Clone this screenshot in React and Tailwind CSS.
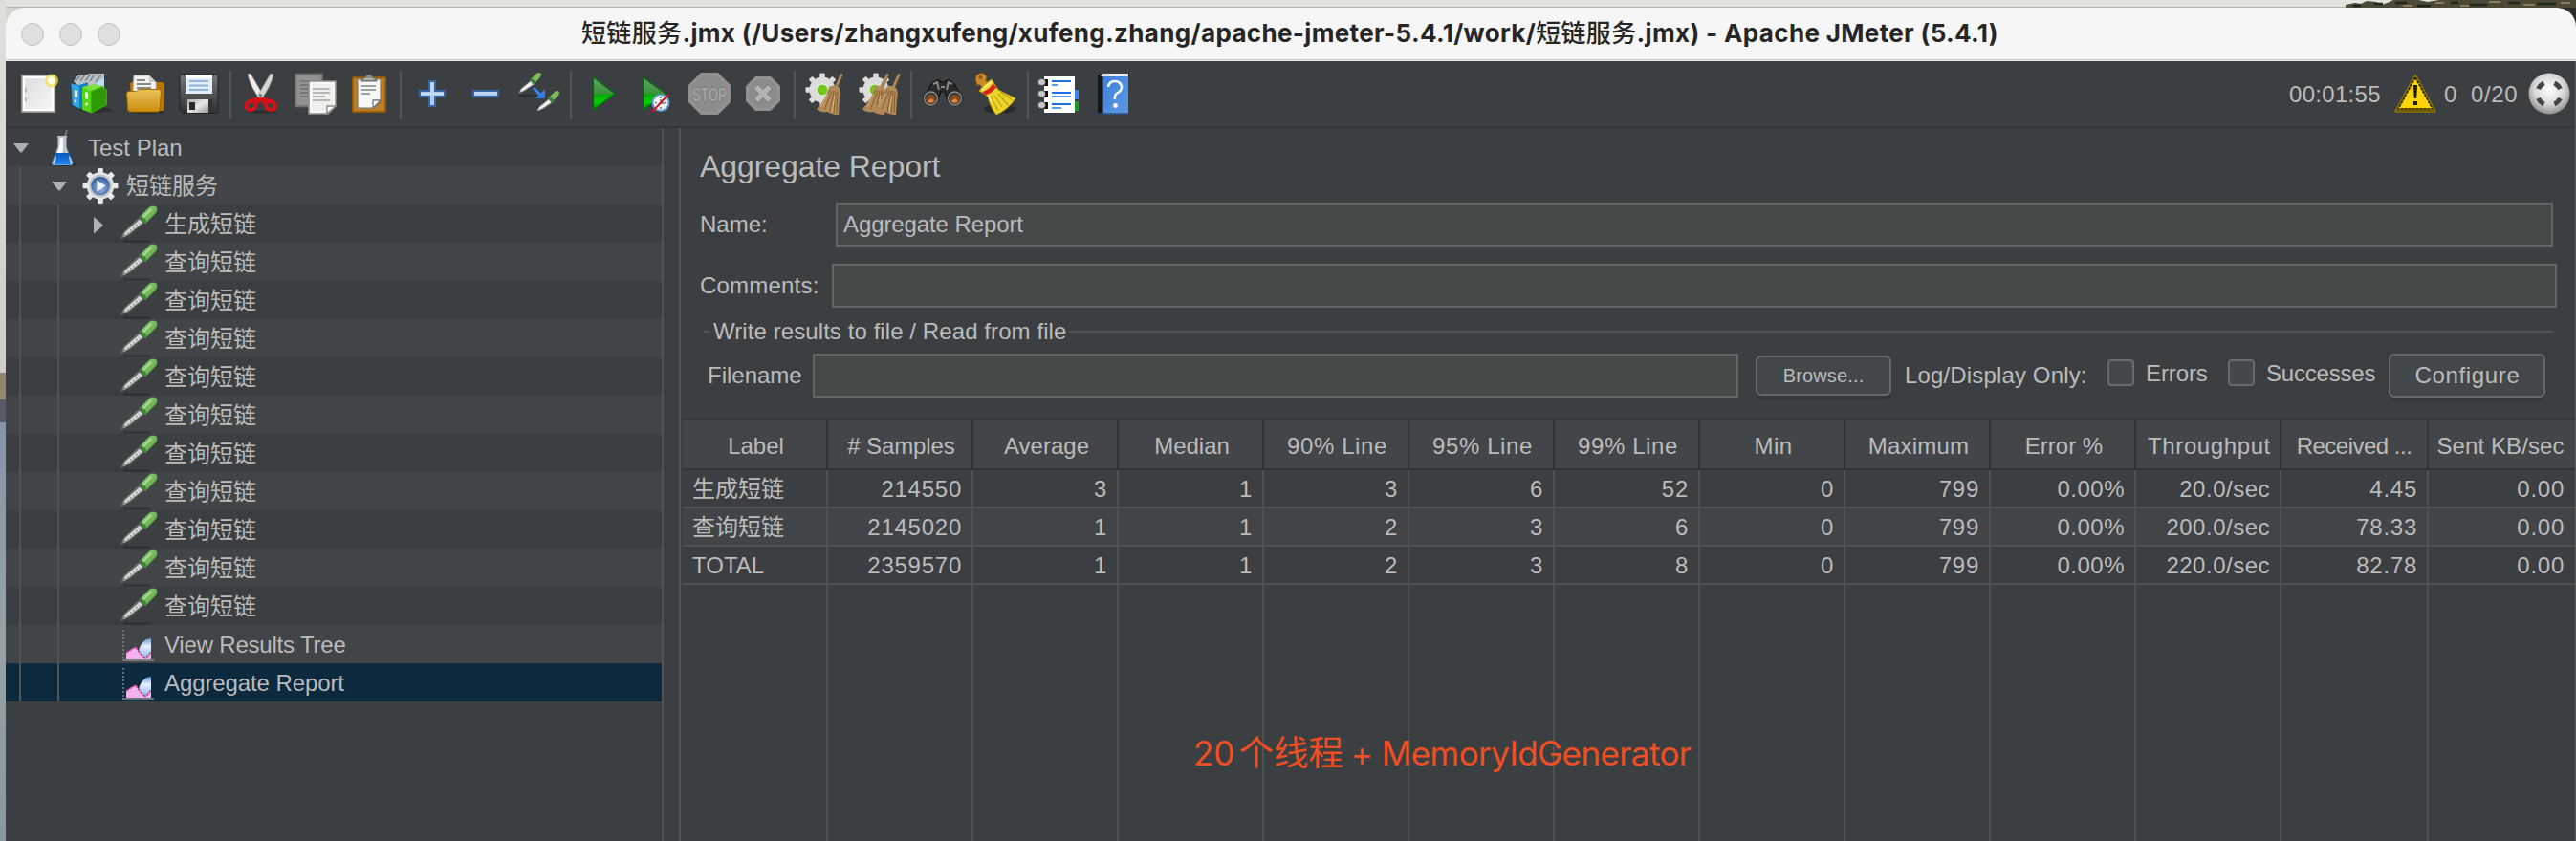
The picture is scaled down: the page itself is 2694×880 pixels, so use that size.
import React from "react";

const SANS = "font-['Liberation_Sans','Noto_Sans_CJK_SC',sans-serif]";
const INTER = "font-['Inter','Noto_Sans_CJK_SC',sans-serif]";

/* ---------- toolbar icons (44 x 44 drawing area) ---------- */

const NewIcon = () => (
  <>
    <rect x="4.8" y="2.8" width="34.5" height="38.4" fill="#fff" stroke="#8b8d8b" strokeWidth="1.7" />
    <rect x="8" y="6" width="28" height="32" fill="url(#paper)" />
    <path d="M8 16.5a1.8 1.8 0 0 1 0 3.4M8 26.5a1.8 1.8 0 0 1 0 3.4" fill="#fff" stroke="#999" strokeWidth="1.2" />
    <circle cx="36" cy="8.5" r="7" fill="#efe04c" opacity=".75" />
    <circle cx="36" cy="8.5" r="4" fill="#fffde0" />
  </>
);

const TemplatesIcon = () => (
  <>
    <ellipse cx="26" cy="39" rx="17" ry="3" fill="#000" opacity=".25" />
    <path d="M3 9l5-7 9 0 3-1h15v25H20z" fill="#b9c2c5" />
    <path d="M6 8l4-5M10 9l5-7M15 9l5-7M20 9l4-6M26 10l5-7M31 12l3-6" stroke="#7d868a" strokeWidth="1.6" />
    <path d="M28 10l7-5v18l-7 3z" fill="#b6e0f8" />
    <path d="M0 11l9 2 9-3v24l-8 4-8-4z" fill="#0f7fc4" />
    <path d="M1 12l8 2v23l-7-3z" fill="#35a5e4" />
    <path d="M4 18l3 1v7l-3-1z" fill="#e8f6ff" />
    <path d="M20 19l13-5 5 4v16l-17 9z" fill="#3aa90a" />
    <path d="M22 20l11-4 4 3v14l-15 8z" fill="#2f9a05" />
    <path d="M12 15l9 3v24l-9-3z" fill="#55d41e" />
    <path d="M12 15l12-3 10 2-13 5z" fill="#7be33f" />
    <path d="M15 20l3 1v7l-3-1z" fill="#effbe6" />
    <circle cx="16.5" cy="33" r="1.6" fill="#eefbe6" />
    <circle cx="5" cy="30" r="1.4" fill="#e8f6ff" />
  </>
);

const OpenIcon = () => (
  <>
    <ellipse cx="23" cy="41" rx="19" ry="2" fill="#000" opacity=".3" />
    <path d="M6 12q0-2 2-2h31q3 0 3 3l-1 27H8z" fill="#b87608" />
    <path d="M10 3h16l7 7v14H9z" fill="#f1f2f0" stroke="#babdb6" />
    <path d="M13 8h9M13 12h15M13 16h15" stroke="#888a85" strokeWidth="1.8" />
    <path d="M26 3v7h7z" fill="#c8cac6" />
    <path d="M2.500 22q0-2.500 3-2.500h7l3-2h20q3 0 3 2.500l-1.500 19q0 2-2.500 2H6q-2 0-2.200-2z" fill="url(#gold)" stroke="#a86a04" strokeWidth="1" />
  </>
);

const SaveIcon = () => (
  <>
    <path d="M2 4q0-2 2-2h35q3 0 3 2v37q0 1.500-2 1.500H5L2 39z" fill="url(#disk)" stroke="#222" strokeWidth="1" />
    <path d="M8 2h28v20H8z" fill="#e3edf8" />
    <path d="M8 2h28v4H8z" fill="#fff" />
    <path d="M12 9h20M12 13.500h20M12 18h20" stroke="#8fb3d9" strokeWidth="2" />
    <path d="M10 28h22v14H10z" fill="url(#metal)" />
    <path d="M12 31h6v8h-6z" fill="#2a2a2a" />
    <path d="M32 28h4v14h-4z" fill="#333" />
  </>
);

const CutIcon = () => (
  <>
    <ellipse cx="22" cy="41" rx="15" ry="1.800" fill="#000" opacity=".25" />
    <path d="M7 2l3-1 14 24-4 3Q10 15 7 2z" fill="#eeeeec" stroke="#999" strokeWidth=".8" />
    <path d="M34 2l-3-1-14 24 4 3Q31 15 34 2z" fill="#d3d7cf" stroke="#999" strokeWidth=".8" />
    <circle cx="20.500" cy="24" r="1.800" fill="#777" />
    <ellipse cx="10.500" cy="34.500" rx="5" ry="4.400" fill="none" stroke="#d81116" strokeWidth="4" transform="rotate(-35 10.500 34.500)" />
    <ellipse cx="31" cy="34.500" rx="5" ry="4.400" fill="none" stroke="#d81116" strokeWidth="4" transform="rotate(35 31 34.500)" />
    <path d="M9 30q7-3 11-2 5-1 12 2" fill="none" stroke="#d81116" strokeWidth="3.500" />
    <path d="M14 34l6-6M27 34l-6-6" stroke="#d81116" strokeWidth="3.500" />
  </>
);

const CopyIcon = () => (
  <>
    <rect x="1" y="1.500" width="28" height="34" fill="#858787" stroke="#6f7171" strokeWidth="1.500" />
    <rect x="3" y="3.500" width="24" height="30" fill="#919393" />
    <path d="M6 9h17M6 13h10M6 17h10M6 21h10M6 25h8" stroke="#6d6f6f" strokeWidth="1.600" />
    <path d="M15 9h28v26l-8 8H15z" fill="#fbfbfa" stroke="#8b8d88" strokeWidth="1.600" />
    <path d="M17.500 11.500h23v23l-7 6h-16z" fill="#efefed" />
    <path d="M19 17h18M19 21h18M19 25h13M19 29h18" stroke="#b6b8b4" strokeWidth="1.800" />
    <path d="M34 43v-8h9z" fill="#fff" stroke="#8b8d88" strokeWidth="1.500" />
  </>
);

const PasteIcon = () => (
  <>
    <rect x="4.800" y="4.800" width="34.400" height="36.400" rx="1" fill="#bd7d26" stroke="#8f5902" strokeWidth="1.700" />
    <path d="M10 7h24v23l-7 7H10z" fill="#f7f7f5" stroke="#777" strokeWidth="1.200" />
    <path d="M14 14h15M14 18h15M14 22h9" stroke="#a0a29e" strokeWidth="1.800" />
    <path d="M26 37v-8h8z" fill="#fff" stroke="#777" strokeWidth="1.300" />
    <path d="M14 9q0-4 4-4 1-3 4-3t4 3q4 0 4 4z" fill="#8b8d86" stroke="#666860" strokeWidth="1" />
    <path d="M17 7h10" stroke="#b9bbb4" strokeWidth="1.600" />
  </>
);

const PlusIcon = () => (
  <>
    <path d="M19 9h6v10h10v6H25v10h-6V25H9v-6h10z" fill="#b0cdee" stroke="#3465a4" strokeWidth="2" />
    <path d="M21 10.500h2v10.500h11v2H10v-2h11z" fill="#d0e2f6" opacity=".6" />
  </>
);

const MinusIcon = () => (
  <>
    <rect x="9" y="19" width="26" height="6" fill="#b0cdee" stroke="#3465a4" strokeWidth="2" />
    <path d="M10 21h24" stroke="#d0e2f6" strokeWidth="1.500" opacity=".7" />
  </>
);

const MiniDropper = ({ x, y }) => (
  <g transform={`translate(${x} ${y})`}>
    <path d="M1 21l2-4L14 8l4 3L6 19z" fill="#eceeeb" stroke="#8c8f8a" strokeWidth=".8" />
    <path d="M12 8l7-7q3-2 5 0 0 3-2 5l-6 6z" fill="#7fbb5c" />
    <path d="M12 8l2-2 5 4-3 3z" fill="#3e7f3a" />
  </g>
);

const ToggleIcon = () => (
  <>
    <ellipse cx="9" cy="24" rx="9" ry="1.500" fill="#000" opacity=".3" />
    <MiniDropper x={0} y={0} />
    <MiniDropper x={19} y={19} />
    <path d="M16 16l9 9" stroke="#3a86f0" strokeWidth="2.600" />
    <path d="M28 17v10H18z" fill="#2f7df0" />
  </>
);

const StartIcon = () => (
  <>
    <path d="M12 4l24 18-24 18z" fill="url(#green)" />
    <path d="M12.500 5v34l23-17z" fill="none" stroke="#0c5d12" strokeWidth="1.200" />
  </>
);

const StartNoPauseIcon = () => (
  <>
    <path d="M8 4l25 18L8 40z" fill="url(#green)" />
    <path d="M8.500 5v34l24-17z" fill="none" stroke="#0c5d12" strokeWidth="1.200" />
    <circle cx="27" cy="31.500" r="8.500" fill="#f4f7fb" stroke="#5f9bdc" strokeWidth="2" />
    <path d="M27 25v2M27 36v2M21 31.500h2M31 31.500h2M27 28v4h4" stroke="#777" strokeWidth="1.600" fill="none" />
    <path d="M18 41l17-18" stroke="#dd1414" strokeWidth="2" />
  </>
);

const StopIcon = () => (
  <>
    <path d="M13 0h18l13 13v18L31 44H13L0 31V13z" fill="#8c8c8c" />
    <path d="M14 2h16l12 12v16L30 42H14L2 30V14z" fill="none" stroke="#949494" strokeWidth="1.500" />
    <text x="22" y="29.500" textAnchor="middle" textLength="36" lengthAdjust="spacingAndGlyphs" fontFamily="Liberation Sans, sans-serif" fontWeight="bold" fontSize="21" fill="#a3a3a3" stroke="#747474" strokeWidth="1.200" paintOrder="stroke">STOP</text>
  </>
);

const ShutdownIcon = () => (
  <>
    <path d="M14 4h16l10 10v16L30 40H14L4 30V14z" fill="#8c8c8c" />
    <path d="M15 6h14l9 9v14l-9 9H15l-9-9V15z" fill="none" stroke="#969696" strokeWidth="1.400" />
    <path d="M14.500 14.500l15 15M29.500 14.500l-15 15" stroke="#7b7b7b" strokeWidth="7" />
    <path d="M15 15l14 14M29 15L15 29" stroke="#b4b4b4" strokeWidth="5.500" />
  </>
);

const Cog = ({ cx, cy, r, fill }) => (
  <g transform={`translate(${cx} ${cy})`}>
    {[0, 45, 90, 135, 180, 225, 270, 315].map((a) => (
      <rect key={a} x={-r * 0.2} y={-r * 1.3} width={r * 0.4} height={r * 0.5} rx="1" fill={fill} transform={`rotate(${a})`} />
    ))}
    <circle r={r} fill={fill} />
  </g>
);

const Besom = ({ dx }) => (
  <g transform={`translate(${dx} 0)`}>
    <path d="M37 1l3 .5-7 16-3-1z" fill="#a98a63" stroke="#6b4f2c" strokeWidth=".6" />
    <path d="M25 15q5-3 10 1 3 4 1 12l-1 16q-7 0-12-3-7 1-11-3 10-10 13-23z" fill="#b48a58" />
    <path d="M26 18L15 37M28 19l-8 20M30 19l-4 22M32 19l-2 23M34 20l-1 22" stroke="#7c5a31" strokeWidth=".9" />
    <path d="M24 22l-8 14M31 24l-3 17" stroke="#ddb987" strokeWidth="1" />
  </g>
);

const ClearIcon = () => (
  <>
    <Cog cx={18} cy={18} r={13.500} fill="#dcdcdc" />
    <circle cx="18" cy="18" r="6.500" fill="#f2f2f2" />
    <circle cx="18" cy="18" r="5.500" fill="#73c51f" />
    <Besom dx={0} />
  </>
);

const ClearAllIcon = () => (
  <>
    <Cog cx={18} cy={18} r={13.500} fill="#dcdcdc" />
    <circle cx="17" cy="18" r="6.500" fill="#f2f2f2" />
    <circle cx="17" cy="18" r="5.500" fill="#73c51f" />
    <Besom dx={-8} />
    <Besom dx={4} />
  </>
);

const SearchIcon = () => (
  <>
    <path d="M14 9q4-3 6 1h4q2-4 6-1l4 3 8 14-14 4-4-10h-4l-4 10L2 26l8-14z" fill="#2b2b2b" stroke="#111" strokeWidth="1.200" />
    <path d="M12 12l4-2 2 8M32 12l-4-2-2 8M20 15h4" stroke="#888" strokeWidth="2" fill="none" />
    <circle cx="9.500" cy="27" r="8.500" fill="#222" />
    <circle cx="9.500" cy="27" r="7" fill="#3a3a3a" stroke="#8d8d8d" strokeWidth="1.300" />
    <circle cx="9.500" cy="28" r="5" fill="#8a4a1c" />
    <path d="M6 30q3 3 7 0l-3-3z" fill="#d98a4c" />
    <circle cx="34.500" cy="27" r="8.500" fill="#222" />
    <circle cx="34.500" cy="27" r="7" fill="#3a3a3a" stroke="#8d8d8d" strokeWidth="1.300" />
    <circle cx="34.500" cy="28" r="5" fill="#8a4a1c" />
    <path d="M31 30q3 3 7 0l-3-3z" fill="#d98a4c" />
  </>
);

const ResetSearchIcon = () => (
  <>
    <ellipse cx="26" cy="38" rx="17" ry="5" fill="#000" opacity=".3" />
    <path d="M1 3q4-4 8-2l3 3-1 4 4 6-5 4-5-5H2l-2-5z" fill="#c98a2e" stroke="#7d4f0e" strokeWidth="1" />
    <circle cx="5.500" cy="5" r="2" fill="#8f5b14" />
    <path d="M4 19q5-7 13-12l3 5 4 6L42 27q-8 12-20 17-6-7-9-19l-4-3z" fill="#edd42a" stroke="#b89b06" strokeWidth="1" />
    <path d="M16 25l8 15M20 24l8 12M24 22l10 12M26 20l13 9" stroke="#bda010" strokeWidth="1.200" />
    <path d="M7 18q5-5 10-8M14 24l3 7" stroke="#fbf08a" strokeWidth="1.500" />
    <path d="M7.500 20q7-2 11-8.500l3.500 4q-4.500 6-12 8z" fill="#d8231c" />
  </>
);

const FunctionIcon = () => (
  <>
    <path d="M36 18h6v10h-6z" fill="#3c86f2" />
    <path d="M36 30h6v10h-6z" fill="#199c1c" />
    <rect x="6" y="4" width="32" height="38" fill="#fff" />
    {[10, 22, 34].map((y) => (
      <g key={y}>
        <path d={`M6 ${y - 3}h4v7H6z`} fill="#111" />
        <rect x="0" y={y - 3} width="7" height="6" rx="2.500" fill="#c9c9c9" stroke="#888" strokeWidth=".7" />
      </g>
    ))}
    <path d="M14 9h20M14 21h20M14 33h20" stroke="#1f6fe8" strokeWidth="2" />
    <path d="M14 13h6M14 25h20M14 37h10" stroke="#5c9cf0" strokeWidth="2" />
  </>
);

const HelpIcon = () => (
  <>
    <path d="M6 3l5-2h28v3H10v40H6z" fill="#161616" />
    <path d="M11 1h27v3H9z" fill="#e6e8ea" />
    <path d="M12 4h26v39H12z" fill="url(#book)" />
    <path d="M6 43h32" stroke="#2b4f86" strokeWidth="1.500" />
    <path d="M17 15q1-6 7-6t7 6q0 4-4 6t-3 7" fill="none" stroke="#fff" strokeWidth="2.400" />
    <circle cx="24.500" cy="34.500" r="2.400" fill="#fff" />
  </>
);

const toolbar = [
  [NewIcon, TemplatesIcon, OpenIcon, SaveIcon],
  [CutIcon, CopyIcon, PasteIcon],
  [PlusIcon, MinusIcon, ToggleIcon],
  [StartIcon, StartNoPauseIcon, StopIcon, ShutdownIcon],
  [ClearIcon, ClearAllIcon],
  [SearchIcon, ResetSearchIcon],
  [FunctionIcon, HelpIcon],
];

const Gradients = () => (
  <svg width="0" height="0" className="absolute">
    <defs>
      <linearGradient id="paper" x1="0" y1="0" x2="1" y2="1">
        <stop offset="0" stopColor="#dedede" />
        <stop offset="1" stopColor="#f6f6f6" />
      </linearGradient>
      <linearGradient id="gold" x1="0" y1="0" x2="0" y2="1">
        <stop offset="0" stopColor="#ecc25e" />
        <stop offset="1" stopColor="#cb8c0d" />
      </linearGradient>
      <linearGradient id="disk" x1="0" y1="0" x2="0" y2="1">
        <stop offset="0" stopColor="#77787a" />
        <stop offset="1" stopColor="#2e2f31" />
      </linearGradient>
      <linearGradient id="metal" x1="0" y1="0" x2="1" y2="1">
        <stop offset="0" stopColor="#aaa" />
        <stop offset=".5" stopColor="#e6e6e6" />
        <stop offset="1" stopColor="#999" />
      </linearGradient>
      <linearGradient id="green" x1="0" y1="0" x2="0" y2="1">
        <stop offset="0" stopColor="#5fae62" />
        <stop offset=".5" stopColor="#3b8f3e" />
        <stop offset=".52" stopColor="#06a906" />
        <stop offset=".75" stopColor="#02cf02" />
        <stop offset="1" stopColor="#0a7a0e" />
      </linearGradient>
      <linearGradient id="book" x1="0" y1="0" x2="1" y2="1">
        <stop offset="0" stopColor="#3f82da" />
        <stop offset="1" stopColor="#5c98e6" />
      </linearGradient>
      <linearGradient id="liquid" x1="0" y1="0" x2="0" y2="1">
        <stop offset="0" stopColor="#0a58b8" />
        <stop offset="1" stopColor="#1f86f5" />
      </linearGradient>
      <linearGradient id="bulb" x1="0" y1="0" x2="1" y2="1">
        <stop offset="0" stopColor="#a5d88a" />
        <stop offset="1" stopColor="#4d9a35" />
      </linearGradient>
      <radialGradient id="ball" cx=".5" cy=".4" r=".6">
        <stop offset="0" stopColor="#fff" />
        <stop offset=".6" stopColor="#d8d8d8" />
        <stop offset="1" stopColor="#8e8e8e" />
      </radialGradient>
      <radialGradient id="orb" cx=".5" cy=".6" r=".6">
        <stop offset="0" stopColor="#a9c4ea" />
        <stop offset="1" stopColor="#2b5796" />
      </radialGradient>
      <linearGradient id="sky" x1="0" y1="0" x2="0" y2="1">
        <stop offset="0" stopColor="#5c9be4" />
        <stop offset=".4" stopColor="#e6f1fc" />
        <stop offset="1" stopColor="#8fbcf0" />
      </linearGradient>
    </defs>
  </svg>
);

/* ---------- tree icons (40 x 40 drawing area) ---------- */

const FlaskIcon = () => (
  <>
    <ellipse cx="20" cy="38" rx="14" ry="2" fill="#000" opacity=".3" />
    <path d="M22 8l2-6" stroke="#777" strokeWidth="2" />
    <path d="M14 8h10.500l-1 2v10l6.500 17q0 2-2 2H10q-2 0-2-2l6.500-17V10z" fill="#b9c4ce" />
    <path d="M17 10h3v14l-6 10h-3l5-14z" fill="#f8fafc" />
    <path d="M12.500 26h14l4 11q0 1.500-2 1.500H10.500q-2 0-2-1.500z" fill="url(#liquid)" />
    <path d="M9 37l3-8 1 1-2 8zM30 37l-3-8-1 1 2 8z" fill="#bcd8f8" />
  </>
);

const ThreadGroupIcon = () => (
  <>
    <Cog cx={19} cy={20.500} r={14.200} fill="#e6e7e8" />
    <circle cx="19" cy="20.500" r="12" fill="#c4c7ca" />
    <circle cx="19" cy="20.500" r="9.800" fill="url(#orb)" />
    <path d="M15.500 14.500l9 6-9 6z" fill="#eef4fc" />
  </>
);

const SamplerIcon = () => (
  <>
    <path d="M3 38.500h28" stroke="#000" strokeWidth="2" opacity=".28" />
    <path d="M0 36l3-7L19 14l6 5L9 32z" fill="#6e716e" />
    <path d="M3 34l2-5L20 16l3 3L8 31z" fill="#dfe2df" />
    <path d="M4 33l16-14" stroke="#8d918d" strokeWidth="1.500" strokeDasharray="2 2" />
    <path d="M20 13l10-10q4-3 8 0 1 4-2 7L26 20z" fill="url(#bulb)" />
    <path d="M20.500 12.500l2-1 5 5.500-1.500 3q-4-1-5.500-7.500z" fill="#3f8332" />
    <path d="M23.500 13.500l9-8.500" stroke="#a5dd84" strokeWidth="2" />
  </>
);

const ListenerIcon = () => (
  <>
    <path d="M3 5v31" stroke="#7b7e80" strokeWidth="1.600" strokeDasharray="2 2" />
    <path d="M2 37h33" stroke="#8a8c8e" strokeWidth="1.500" />
    <path d="M19 28q1-8 8-13l5-1v20H21z" fill="url(#sky)" />
    <path d="M6 36v-7l6-4 4-2 5 7 5 5 6-6v7z" fill="#f3b2ee" />
    <path d="M6 29l6-4 4-2 5 7 4 4 3-1 4-5" fill="none" stroke="#c93f86" strokeWidth="1.600" strokeDasharray="3 1" />
  </>
);

const ArrowDown = () => (
  <svg width="16" height="10" viewBox="0 0 16 10" className="ml-2">
    <path d="M0 0h16L8.700 9.400h-1.400z" fill="#aeb0b1" />
  </svg>
);
const ArrowRight = () => (
  <svg width="10" height="18" viewBox="0 0 10 18" className="ml-3 -mb-0.5">
    <path d="M0 0v17.500L9.600 9.300V8.200z" fill="#aeb0b1" />
  </svg>
);

const tree = [
  { level: 0, icon: FlaskIcon, text: "Test Plan", arrow: "down" },
  { level: 1, icon: ThreadGroupIcon, text: "短链服务", arrow: "down" },
  { level: 2, icon: SamplerIcon, text: "生成短链", arrow: "right" },
  ...Array.from({ length: 10 }, () => ({ level: 2, icon: SamplerIcon, text: "查询短链" })),
  { level: 2, icon: ListenerIcon, text: "View Results Tree", cls: "tracking-[-0.2px]" },
  { level: 2, icon: ListenerIcon, text: "Aggregate Report", selected: true, cls: "tracking-[-0.1px]" },
];

function TreeRow({ row, index }) {
  const Icon = row.icon;
  const bg = row.selected ? "bg-[#0d293e]" : index % 2 ? "bg-[#414547]" : "bg-[#3c3f41]";
  return (
    <div className={`flex h-10 shrink-0 items-center ${bg}`}>
      {Array.from({ length: row.level }, (_, i) => (
        <div key={i} className="h-10 w-10 shrink-0 pl-3.5">
          <div className="h-full w-0.5 bg-[#525252]" />
        </div>
      ))}
      <div className="flex h-10 w-10 shrink-0 items-center pt-0.5">
        {row.arrow === "down" && <ArrowDown />}
        {row.arrow === "right" && <ArrowRight />}
      </div>
      <svg width="40" height="40" viewBox="0 0 40 40" className="shrink-0">
        <Icon />
      </svg>
      <span className={`pl-1.5 pt-0.5 whitespace-nowrap ${row.cls || ""}`}>{row.text}</span>
    </div>
  );
}

/* ---------- results table ---------- */

const columns = [
  { label: "Label", w: "w-[152px]", cls: "" },
  { label: "# Samples", w: "w-[152px]", cls: "tracking-[-0.1px]" },
  { label: "Average", w: "w-[152px]", cls: "" },
  { label: "Median", w: "w-[152px]", cls: "" },
  { label: "90% Line", w: "w-[152px]", cls: "tracking-[0.6px]" },
  { label: "95% Line", w: "w-[152px]", cls: "tracking-[0.6px]" },
  { label: "99% Line", w: "w-[152px]", cls: "tracking-[0.6px]" },
  { label: "Min", w: "w-[152px]", cls: "tracking-[0.4px]" },
  { label: "Maximum", w: "w-[152px]", cls: "tracking-[0.2px]" },
  { label: "Error %", w: "w-[152px]", cls: "" },
  { label: "Throughput", w: "w-[152px]", cls: "tracking-[0.6px]" },
  { label: "Received ...", w: "w-[154px]", cls: "tracking-[-0.5px] pr-[3px]" },
  { label: "Sent KB/sec", w: "w-[152px]", cls: "tracking-[0.1px] pr-[5px]" },
];

const rows = [
  ["生成短链", "214550", "3", "1", "3", "6", "52", "0", "799", "0.00%", "20.0/sec", "4.45", "0.00"],
  ["查询短链", "2145020", "1", "1", "2", "3", "6", "0", "799", "0.00%", "200.0/sec", "78.33", "0.00"],
  ["TOTAL", "2359570", "1", "1", "2", "3", "8", "0", "799", "0.00%", "220.0/sec", "82.78", "0.00"],
];

const edge = (i, color) => (i < columns.length - 1 ? `border-r-2 ${color}` : "");

function cellStyle(i) {
  if (i === 0) return "text-left";
  if (i === 9 || i === 10) return "text-right tracking-[0.5px]";
  return "text-right tracking-[0.75px]";
}

function ResultsTable() {
  return (
    <div className="relative ml-0.5 mt-[22px] flex flex-1 flex-col">
      <div className="flex h-[54px] shrink-0 border-y-2 border-[#323638] bg-[#424648]">
        {columns.map((c, i) => (
          <div key={c.label} className={`${c.w} ${edge(i, "border-[#323638]")} shrink-0 pl-[3px] pt-0.5 text-center leading-[50px] whitespace-nowrap ${c.cls}`}>
            {c.label}
          </div>
        ))}
      </div>
      {rows.map((r, ri) => (
        <div key={ri} className={`flex h-10 shrink-0 border-b-2 border-[#505050] ${ri % 2 ? "bg-[#414547]" : ""}`}>
          {r.map((v, i) => (
            <div key={i} className={`${columns[i].w} ${edge(i, "border-[#505050]")} ${cellStyle(i)} h-[38px] shrink-0 px-2.5 leading-[39px] whitespace-nowrap`}>
              {v}
            </div>
          ))}
        </div>
      ))}
      <div className="flex flex-1">
        {columns.map((c, i) => (
          <div key={c.label} className={`${c.w} ${edge(i, "border-[#505050]")} shrink-0`} />
        ))}
      </div>
      <div className={`absolute left-[534px] top-[325px] text-[35px] leading-[50px] whitespace-nowrap text-[#f04e23] ${INTER}`}>
        20<span className="ml-1 text-[36.5px]">个线程</span>
        <span className="-ml-0.5"> + </span>
        <span className="-ml-px tracking-[-0.6px]">MemoryIdGenerator</span>
      </div>
    </div>
  );
}

const field = "h-[46px] shrink-0 border-2 border-[#646464] bg-[#45494a]";
const button = "shrink-0 rounded-md border-2 border-[#666a6c] bg-[#42474a] text-center shadow-[0_4px_0_#35383a]";
const checkbox = "mt-1.5 h-7 w-7 shrink-0 rounded-[4px] border-2 border-[#6a6a6a] bg-[#43484a]";

export default function App() {
  return (
    <div className="relative flex h-[880px] w-[2694px] overflow-hidden bg-[#e3e2dd]">
      <Gradients />
      <div className="flex w-1.5 shrink-0 flex-col bg-linear-to-b from-[#e0dfda] to-[#b9bab6]">
        <div className="h-[390px]" />
        <div className="h-7 bg-[#94856f]" />
        <div className="h-6 bg-[#595b66]" />
        <div className="flex-1 bg-linear-to-b from-[#8296a8] via-[#98a1a6] to-[#8b979e]" />
      </div>
      <div className="flex w-[2688px] flex-col">
        <div className="flex h-2 shrink-0 border-b border-[#b5b6b0]">
          <div className="w-[2447px]" />
          <svg width="241" height="8" viewBox="0 0 241 8">
            <path d="M0 8V5l10-2 6 1 6-3 10 1 6 3 8-3 4-2h26l10 2 12-2h143v8z" fill="#4a4a36" />
            <path d="M8 6h8M30 4h9M52 3h12M75 6h14M110 3h8M130 5h18M170 3h12M200 4h20" stroke="#23261b" strokeWidth="2.500" />
            <path d="M60 6h10M94 3h9M120 6h9M150 2h12M186 5h12M225 3h10" stroke="#8d7b58" strokeWidth="2" />
          </svg>
        </div>

        <div className={`flex min-h-0 flex-1 flex-col bg-[#3c3f41] text-2xl text-[#bbbbbb] ${SANS}`}>
          <div className="flex h-14 shrink-0 bg-[linear-gradient(to_right,#d6d5d0_50%,#2b2c24_50%)]">
            <div className="flex w-full rounded-t-[20px] border-b border-[#ececec] bg-[#f6f6f6]">
              <div className="flex w-full border-b border-[#cbcdcc]">
                <div className="flex w-[200px] items-center gap-4 pl-4 pt-0.5">
                  {[0, 1, 2].map((i) => (
                    <div key={i} className="h-6 w-6 rounded-full border border-[#bfbfbf] bg-[#dfdfdf]" />
                  ))}
                </div>
                <div className={`flex-1 text-center text-[26px] font-bold leading-[54px] tracking-[0.34px] whitespace-nowrap text-[#262626] ${INTER}`}>
                  <span className="font-medium">短链服务</span>
                  .jmx (/Users/zhangxufeng/xufeng.zhang/apache-jmeter-5.4.1/work/
                  <span className="font-medium">短链服务</span>
                  .jmx) - Apache JMeter (5.4.1)
                </div>
                <div className="w-[202px]" />
              </div>
            </div>
          </div>

          <div className="flex min-h-0 flex-1 flex-col border-r border-[#5b5d5f]">
            <div className="flex h-[70px] shrink-0 border-b-2 border-[#323638] pl-1.5">
              {toolbar.map((group, gi) => (
                <React.Fragment key={gi}>
                  {gi > 0 && <div className="mx-1 mt-2.5 h-[50px] w-0.5 bg-[#555555]" />}
                  {group.map((Icon, i) => (
                    <svg key={i} width="44" height="44" viewBox="0 0 44 44" className="mx-1.5 mt-3 shrink-0 overflow-visible">
                      <Icon />
                    </svg>
                  ))}
                </React.Fragment>
              ))}
              <div className="ml-auto flex pr-[5px] leading-[70px]">
                <span className="w-[110px] tracking-[0.3px]">00:01:55</span>
                <svg width="44" height="44" viewBox="0 0 44 44" className="mt-3">
                  <path d="M22 3L1.500 40.500h41z" fill="#9d8406" stroke="#8a7406" strokeWidth="2.500" strokeLinejoin="round" />
                  <path d="M22 5L4 38h36z" fill="#fdd406" stroke="#2b2500" strokeWidth="1.800" strokeDasharray="3 1" />
                  <path d="M3 37.500h38v3H3z" fill="#665505" />
                  <path d="M20 13h4l-.7 14h-2.600zM20 30h4v4h-4z" fill="#1d1a00" />
                </svg>
                <span className="ml-2 w-7">0</span>
                <span className="w-[60px] tracking-[0.6px]">0/20</span>
                <svg width="44" height="44" viewBox="0 0 44 44" className="mt-3">
                  <circle cx="22" cy="22" r="21.500" fill="url(#ball)" />
                  <path d="M10.500 17q2-4 6-6M27.500 11q4 2 6 6M33.500 27q-2 4-6 6M16.500 33q-4-2-6-6" fill="none" stroke="#444" strokeWidth="5" />
                </svg>
              </div>
            </div>

            <div className="flex min-h-0 flex-1">
              <div className="flex w-[688px] shrink-0 flex-col border-r-2 border-[#515151]">
                {tree.map((row, i) => (
                  <TreeRow key={i} row={row} index={i} />
                ))}
              </div>
              <div className="w-4 shrink-0" />
              <div className="flex flex-1 flex-col border-l-2 border-[#555555]">
                <div className="pl-5 pt-5 text-[32px] leading-10 tracking-[-0.08px]">Aggregate Report</div>
                <div className="mt-[18px] flex h-[46px] leading-[46px]">
                  <div className="w-[162px] shrink-0 pl-5">Name:</div>
                  <div className={`${field} w-[1796px] pl-1.5 leading-[42px] tracking-[-0.1px]`}>Aggregate Report</div>
                </div>
                <div className="mt-[18px] flex h-[46px] leading-[46px]">
                  <div className="w-[158px] shrink-0 pl-5 tracking-[0.2px]">Comments:</div>
                  <div className={`${field} w-[1804px]`} />
                </div>
                <div className="mt-[11px] flex h-7 items-center pl-6 leading-7">
                  <div className="h-0.5 w-1.5 bg-[#555555]" />
                  <div className="w-[376px] pl-1 tracking-[0.08px] whitespace-nowrap">Write results to file / Read from file</div>
                  <div className="h-0.5 w-[1552px] bg-[#555555]" />
                </div>
                <div className="mt-[9px] flex h-[46px] items-start pl-7 leading-[46px] whitespace-nowrap">
                  <div className="w-[110px] shrink-0">Filename</div>
                  <div className={`${field} w-[968px]`} />
                  <div className={`${button} ml-[18px] mt-0.5 h-[42px] w-[142px] text-xl leading-[38px] tracking-[0.15px]`}>Browse...</div>
                  <div className="ml-[14px] w-[212px] shrink-0 tracking-[0.15px]">Log/Display Only:</div>
                  <div className={checkbox} />
                  <div className="-mt-0.5 ml-3 w-[86px] shrink-0 tracking-[-0.1px]">Errors</div>
                  <div className={checkbox} />
                  <div className="-mt-0.5 ml-3 w-[128px] shrink-0 tracking-[-0.2px]">Successes</div>
                  <div className={`${button} h-[46px] w-[164px] pl-px leading-[42px] tracking-[0.65px]`}>Configure</div>
                </div>
                <ResultsTable />
              </div>
            </div>
          </div>
        </div>
      </div>
    </div>
  );
}
